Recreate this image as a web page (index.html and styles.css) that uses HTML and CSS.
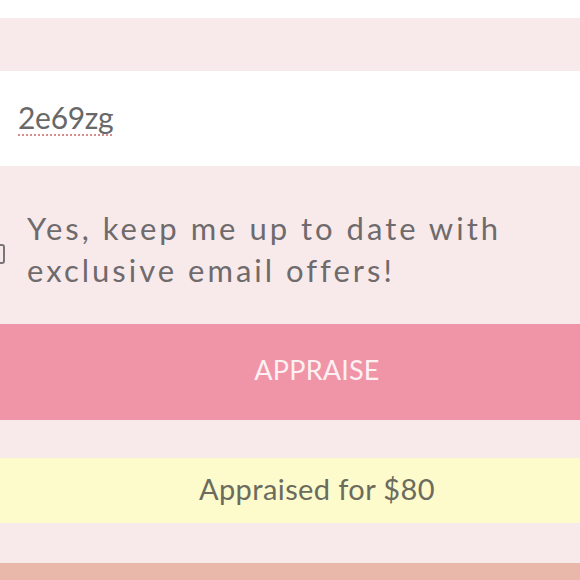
FILE: index.html
```html
<!DOCTYPE html>
<html>
<head>
<meta charset="utf-8">
<link rel="stylesheet" href="styles.css">
</head>
<body>
<div class="page">
  <div class="top"></div>
  <div class="spacer s1"></div>
  <div class="field"><span class="code">2e69zg</span></div>
  <div class="consent">
    <span class="box"></span>
    <p class="label">Yes, keep me up to date with exclusive email offers!</p>
  </div>
  <div class="btn">APPRAISE</div>
  <div class="spacer s2"></div>
  <div class="result">Appraised for $80</div>
  <div class="spacer s3"></div>
  <div class="footer"></div>
</div>
</body>
</html>
```
FILE: styles.css
```css
html, body {
  margin: 0;
  padding: 0;
  background: #f8eaeb;
  font-family: "Lato", "Liberation Sans", sans-serif;
}
.page {
  display: flex;
  flex-direction: column;
  width: 580px;
  height: 580px;
  overflow: hidden;
}
.top { height: 18px; background: #ffffff; flex: none; }
.spacer { flex: none; background: #f8eaeb; }
.s1 { height: 53px; }
.s2 { height: 38px; }
.s3 { height: 40px; }
.field {
  flex: none;
  height: 95px;
  background: #ffffff;
  display: flex;
  align-items: center;
  padding-left: 18px;
  padding-bottom: 4px;
  box-sizing: border-box;
}
.code {
  font-size: 30px;
  color: #686868;
  letter-spacing: -0.3px;
  text-decoration: underline dotted #d98c8c;
  text-decoration-thickness: 2px;
  text-underline-offset: 6px;
}
.consent {
  flex: none;
  height: 158px;
  display: flex;
  align-items: center;
  gap: 22px;
}
.box {
  flex: none;
  width: 20px;
  height: 20px;
  margin-left: -15px;
  border: 2px solid #7a7578;
  border-radius: 3px;
  box-sizing: border-box;
  margin-top: 18px;
}
.label {
  margin: 8px 0 0;
  font-size: 31px;
  line-height: 42px;
  letter-spacing: 3px;
  color: #6f6a6c;
  width: 540px;
}
.btn {
  flex: none;
  height: 96px;
  background: #f094a8;
  color: #fdf0f2;
  font-size: 27px;
  letter-spacing: 0.2px;
  display: flex;
  align-items: center;
  justify-content: center;
  padding-left: 54px;
  padding-bottom: 5px;
  box-sizing: border-box;
}
.result {
  flex: none;
  height: 65px;
  background: #fdfacc;
  color: #6b6b5e;
  font-size: 29px;
  letter-spacing: 0.4px;
  display: flex;
  align-items: center;
  justify-content: center;
  padding-left: 54px;
  padding-bottom: 4px;
  box-sizing: border-box;
}
.footer { flex: 1; background: #e9b8ab; }
```
